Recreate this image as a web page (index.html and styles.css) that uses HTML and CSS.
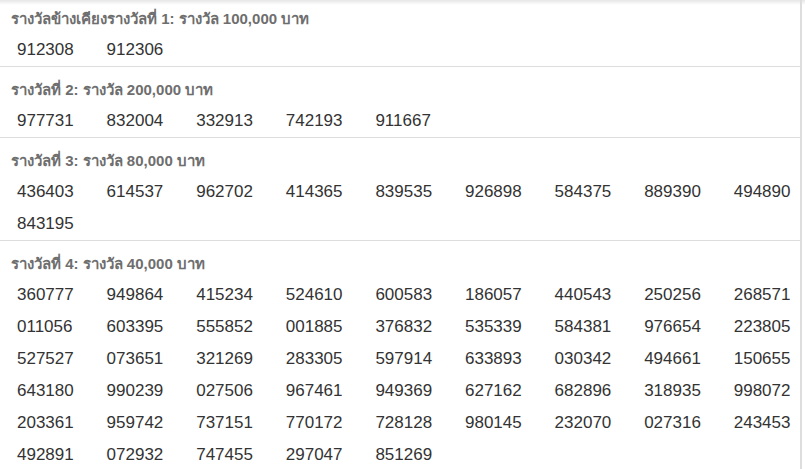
FILE: index.html
```html
<!DOCTYPE html>
<html lang="th">
<head>
<meta charset="utf-8">
<title>ผลรางวัล</title>
<link rel="stylesheet" href="styles.css">
</head>
<body>
<div class="panel">
  <section class="prize prize-first">
    <h3 class="prize-title">รางวัลข้างเคียงรางวัลที่ 1: รางวัล 100,000 บาท</h3>
    <div class="numbers">
      <span>912308</span><span>912306</span>
    </div>
  </section>
  <section class="prize">
    <h3 class="prize-title">รางวัลที่ 2: รางวัล 200,000 บาท</h3>
    <div class="numbers">
      <span>977731</span><span>832004</span><span>332913</span><span>742193</span><span>911667</span>
    </div>
  </section>
  <section class="prize">
    <h3 class="prize-title">รางวัลที่ 3: รางวัล 80,000 บาท</h3>
    <div class="numbers">
      <span>436403</span><span>614537</span><span>962702</span><span>414365</span><span>839535</span><span>926898</span><span>584375</span><span>889390</span><span>494890</span>
      <span>843195</span>
    </div>
  </section>
  <section class="prize">
    <h3 class="prize-title">รางวัลที่ 4: รางวัล 40,000 บาท</h3>
    <div class="numbers">
      <span>360777</span><span>949864</span><span>415234</span><span>524610</span><span>600583</span><span>186057</span><span>440543</span><span>250256</span><span>268571</span>
      <span>011056</span><span>603395</span><span>555852</span><span>001885</span><span>376832</span><span>535339</span><span>584381</span><span>976654</span><span>223805</span>
      <span>527527</span><span>073651</span><span>321269</span><span>283305</span><span>597914</span><span>633893</span><span>030342</span><span>494661</span><span>150655</span>
      <span>643180</span><span>990239</span><span>027506</span><span>967461</span><span>949369</span><span>627162</span><span>682896</span><span>318935</span><span>998072</span>
      <span>203361</span><span>959742</span><span>737151</span><span>770172</span><span>728128</span><span>980145</span><span>232070</span><span>027316</span><span>243453</span>
      <span>492891</span><span>072932</span><span>747455</span><span>297047</span><span>851269</span>
    </div>
  </section>
</div>
</body>
</html>
```
FILE: styles.css
```css
html, body {
  margin: 0;
  padding: 0;
  background: #ffffff;
}

body {
  font-family: "Liberation Sans", Arial, "Noto Sans", sans-serif;
  color: #333333;
  overflow: hidden;
  background-image: linear-gradient(to bottom, #e6e6e6 0px, #ffffff 5px);
  background-repeat: no-repeat;
  background-size: 100% 6px;
}

.panel {
  width: 802px;
  border-right: 2px solid #dddddd;
  box-sizing: border-box;
  min-height: 469px;
}

.prize {
  padding: 14px 0 0 0;
  border-bottom: 1px solid #dddddd;
}

.prize:last-child {
  border-bottom: none;
}

.prize-first {
  padding-top: 10px;
}

.prize-title {
  margin: 0 0 6px 0;
  padding-left: 11px;
  font-size: 15px;
  line-height: 18px;
  font-weight: bold;
  color: #6e6e6e;
}

.numbers {
  display: grid;
  grid-template-columns: repeat(8, 89.6px) auto;
  padding-left: 17px;
  font-size: 17px;
  line-height: 32px;
  color: #333333;
}
```
